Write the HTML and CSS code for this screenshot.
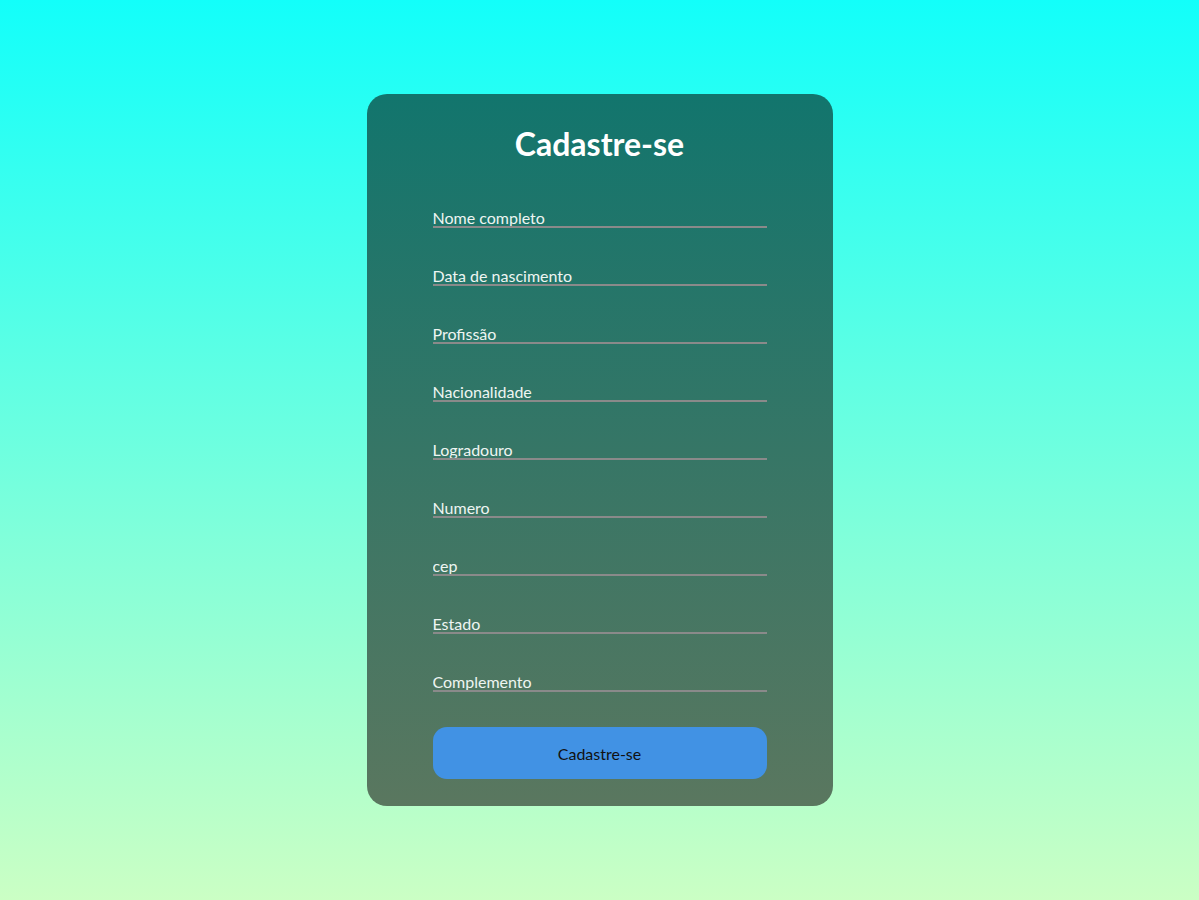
FILE: index.html
```html
<!DOCTYPE html>
<html lang="pt">
<head>
<meta charset="utf-8">
<title>Cadastre-se</title>
<link rel="stylesheet" href="styles.css">
</head>
<body>
<main class="page">
  <form class="card">
    <h1 class="title">Cadastre-se</h1>
    <div class="fields">
      <input class="field" type="text" placeholder="Nome completo">
      <input class="field" type="text" placeholder="Data de nascimento">
      <input class="field" type="text" placeholder="Profissão">
      <input class="field" type="text" placeholder="Nacionalidade">
      <input class="field" type="text" placeholder="Logradouro">
      <input class="field" type="text" placeholder="Numero">
      <input class="field" type="text" placeholder="cep">
      <input class="field" type="text" placeholder="Estado">
      <input class="field" type="text" placeholder="Complemento">
    </div>
    <button class="submit" type="button">Cadastre-se</button>
  </form>
</main>
</body>
</html>
```
FILE: styles.css
```css
* { box-sizing: border-box; }
html, body { margin: 0; padding: 0; }
body {
  font-family: Lato, "Open Sans", "Noto Sans", sans-serif;
  background: linear-gradient(180deg, #12fffa 0%, #cbffc4 100%);
  min-height: 100vh;
}
.page {
  height: 100vh;
  display: flex;
  align-items: center;
  justify-content: center;
}
.card {
  width: 466px;
  height: 712px;
  border-radius: 20px;
  background: linear-gradient(180deg, #12756d 0%, #5a775f 100%);
  padding: 32px 66px 27px;
  display: flex;
  flex-direction: column;
}
.title {
  margin: 0;
  color: #ffffff;
  font-size: 32px;
  font-weight: 700;
  line-height: 36px;
  text-align: center;
}
.fields {
  margin-top: 42px;
  display: flex;
  flex-direction: column;
  gap: 34px;
}
.field {
  display: block;
  width: 100%;
  height: 24px;
  padding: 5px 0 0;
  border: none;
  border-bottom: 2px solid #8a8a8a;
  background: transparent;
  font-family: inherit;
  font-size: 16px;
  line-height: 17px;
  color: #ffffff;
  outline: none;
}
.field::placeholder { color: #eef5f2; opacity: 1; }
.submit {
  margin-top: 35px;
  height: 52px;
  width: 100%;
  border: none;
  border-radius: 14px;
  background: #4192e4;
  color: #111111;
  font-family: inherit;
  font-size: 16px;
}
```
